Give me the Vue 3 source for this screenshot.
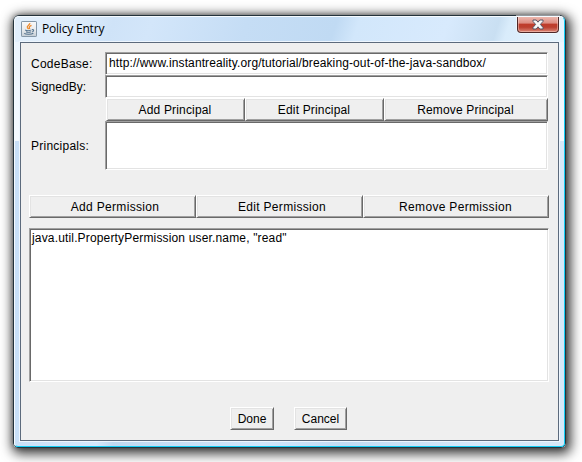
<script setup>
const codeBase = 'http://www.instantreality.org/tutorial/breaking-out-of-the-java-sandbox/'
const principalActions = ['Add Principal', 'Edit Principal', 'Remove Principal']
const permissionActions = ['Add Permission', 'Edit Permission', 'Remove Permission']
const permissions = ['java.util.PropertyPermission user.name, "read"']
</script>

<template>
  <div class="desktop">
    <div class="window">
      <header class="titlebar">
        <svg class="app-icon" width="16" height="16" viewBox="0 0 16 16">
          <defs>
            <linearGradient id="iconbg" x1="0" y1="0" x2="0" y2="1">
              <stop offset="0" stop-color="#fafafa" />
              <stop offset="0.6" stop-color="#e6e9ec" />
              <stop offset="1" stop-color="#c3ccd4" />
            </linearGradient>
          </defs>
          <rect x="0.5" y="0.5" width="15" height="15" rx="0.6" fill="url(#iconbg)" stroke="#8497a8" />
          <path d="M8.8 2.2C9.2 4 5.3 4.6 6.4 6.6L7.6 8.2M10.5 4.3C8.5 5.2 7.7 6 8.8 8" fill="none" stroke="#ee8a2c" stroke-width="1.3" />
          <path d="M4.2 8.9C5 10 9.5 9.8 10.2 9M5.1 10.8C6.2 11.5 8.8 11.4 9.8 10.8M3.2 12.4C5 13.6 10.5 13.5 12.3 12.2M10.8 8.8C13.5 8 13.1 10.6 10.8 11" fill="none" stroke="#54738f" stroke-width="1.05" />
        </svg>
        <span class="title">Policy Entry</span>
        <button class="close" aria-label="Close">
          <svg width="12" height="11" viewBox="0 0 12 11">
            <path d="M1 1H4.2L6 3.2L7.8 1H11V2.4L8.4 5.4L11 8.5V10H7.8L6 7.8L4.2 10H1V8.5L3.6 5.4L1 2.4Z" fill="#f8f8f8" stroke="#565768" />
          </svg>
        </button>
      </header>
      <main class="client">
        <section class="form">
          <label class="label">CodeBase:</label>
          <div class="sunken field"><span class="url">{{ codeBase }}</span></div>
          <label class="label signed">SignedBy:</label>
          <div class="sunken field"></div>
          <div class="buttons principal-buttons">
            <button v-for="a in principalActions" :key="a" class="btn">{{ a }}</button>
          </div>
          <label class="label">Principals:</label>
          <div class="sunken"></div>
        </section>
        <div class="buttons permission-buttons">
          <button v-for="a in permissionActions" :key="a" class="btn">{{ a }}</button>
        </div>
        <div class="sunken permissions">
          <div v-for="p in permissions" :key="p" class="item">{{ p }}</div>
        </div>
        <footer class="footer">
          <button class="btn done">Done</button>
          <button class="btn cancel">Cancel</button>
        </footer>
      </main>
    </div>
  </div>
</template>

<style>
body { margin: 0; background: #fff; overflow: hidden; }
</style>

<style scoped>
* { box-sizing: border-box; }
.desktop {
  width: 582px;
  height: 462px;
  padding: 15px 16px 14px 13px;
  overflow: hidden;
  background: #fff;
  font: 12px/15px "Liberation Sans", Arial, sans-serif;
  color: #000;
}
.window {
  width: 553px;
  height: 433px;
  padding: 0 6px 6px;
  border: 1px solid #24333c;
  border-radius: 6px 6px 5px 5px;
  background:
    linear-gradient(#ecf5fe, #f5faff) left 26px / 6px 99px no-repeat,
    linear-gradient(#ecf5fe, #f5faff) right 26px / 6px 99px no-repeat,
    linear-gradient(108deg, #e2effc 0, #dfedfb 11%, #cfe3f8 18%, #d3e6fa 25%, #c5ddf5 42%, #c0daf3 58%, #d2e7fb 62%, #d8eafd 78%, #c9dff2 87%, #d9ecfb 89%, #e6f4fd 100%) left top / 100% 26px no-repeat,
    linear-gradient(90deg, #c9e0f8 0, #d4e8fc 15%, #c0d9f1 18%, #d0e6fc 45%, #c2dcf4 60%, #d6e9fb 85%, #d6e8f8 100%);
  box-shadow: 2px 3px 12px 3px rgba(0, 0, 0, 0.75), 0 0 5px rgba(0, 0, 0, 0.35);
  position: relative;
}
.window::after {
  content: "";
  position: absolute;
  inset: 0;
  border: 1px solid #f6fbff;
  border-right-color: #12cdf5;
  border-bottom-color: #12cdf5;
  border-radius: 5px 5px 4px 4px;
  pointer-events: none;
}
.titlebar {
  height: 26px;
  display: flex;
  align-items: flex-start;
  padding-left: 1px;
}
.app-icon { margin-top: 5px; }
.title {
  margin: 5px 0 0 5px;
  font: 12px/16px "Open Sans", "Noto Sans", sans-serif;
  letter-spacing: -0.2px;
  white-space: nowrap;
}
.close {
  margin-left: auto;
  width: 42px;
  height: 17px;
  padding: 0;
  display: flex;
  align-items: center;
  justify-content: center;
  border: 1px solid #4e2828;
  border-top: 0;
  border-radius: 0 0 4px 4px;
  background: linear-gradient(#efbeb5 0, #dc8c81 45%, #bf3c2b 50%, #bc4030 70%, #dc8878 100%);
  box-shadow: inset 0 0 0 1px rgba(255, 220, 210, 0.45), 0 0 0 1px rgba(255, 255, 255, 0.5);
}
.client {
  width: 539px;
  height: 399px;
  padding: 9px 9px 0 8px;
  border: 1px solid #5c6a7c;
  background: #efefef;
  box-shadow: 0 0 0 1px #eef6fe;
}
.form {
  display: grid;
  grid-template-columns: 76px 443px;
  grid-template-rows: 23px 23px 23px 49px;
}
.label { align-self: center; padding: 2px 0 0 2px; letter-spacing: 0.25px; }
.signed { letter-spacing: 0.05px; }
.url { letter-spacing: 0.115px; }
.buttons { display: grid; }
.principal-buttons { grid-column: 2; grid-template-columns: 139px 139px 164px; padding-left: 1px; }
.principal-buttons .btn { letter-spacing: 0.16px; padding-right: 1px; }
.permission-buttons { margin-top: 25px; height: 23px; grid-template-columns: 167px 167px 186px; }
.permission-buttons .btn { letter-spacing: 0.32px; padding: 2px 0 0 5px; }
.permission-buttons .btn:last-child { padding: 2px 1px 0 0; }
.sunken {
  background: #fff;
  border: 1px solid;
  border-color: #a0a0a0 #fff #fff #a0a0a0;
  box-shadow: inset 1px 1px #696969, inset -1px -1px #e3e3e3;
}
.field { padding: 3px; line-height: 15px; white-space: nowrap; }
.btn {
  margin: 0;
  padding: 2px 0 0;
  font: inherit;
  color: #000;
  background: #efefef;
  border: 1px solid;
  border-color: #fff #696969 #696969 #fff;
  border-radius: 0;
  box-shadow: inset 1px 1px #e3e3e3, inset -1px -1px #a0a0a0;
}
.permissions { margin-top: 10px; width: 520px; height: 154px; padding: 2px; }
.item { line-height: 15px; letter-spacing: 0.16px; }
.footer { display: flex; gap: 20px; padding: 25px 0 0 201px; }
.footer .btn { height: 23px; }
.done { width: 44px; }
.cancel { width: 53px; }
</style>
